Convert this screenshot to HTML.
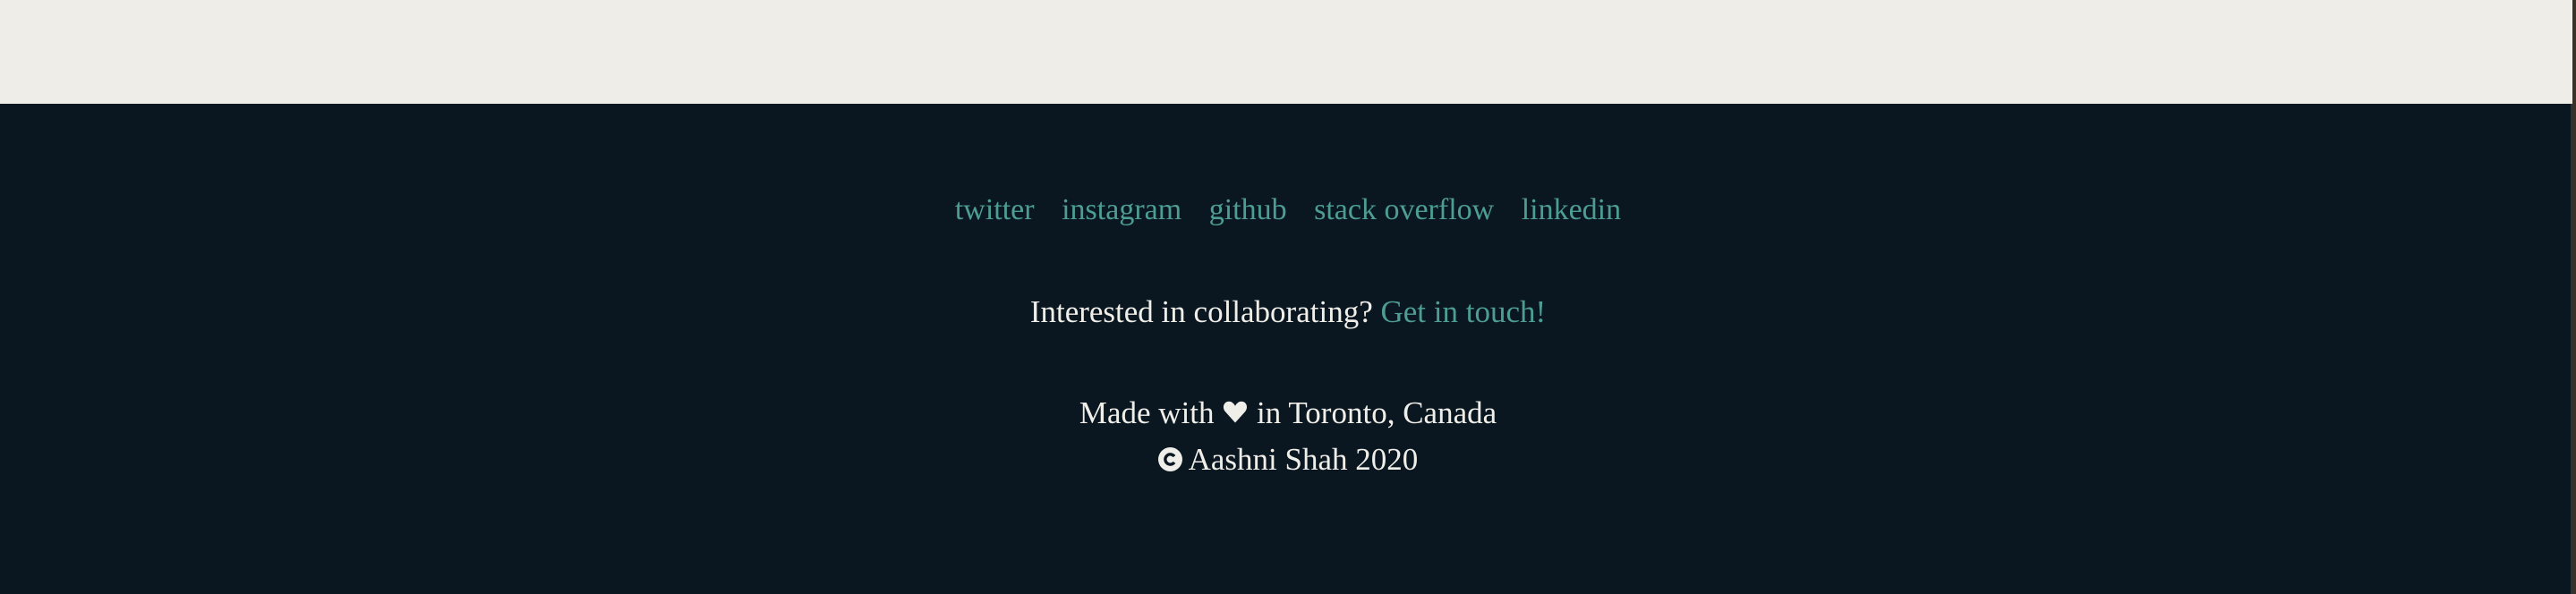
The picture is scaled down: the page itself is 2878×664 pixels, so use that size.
<!DOCTYPE html>
<html><head><style>
html,body{margin:0;padding:0;width:2878px;height:664px;overflow:hidden;background:#0a1721;font-family:"Liberation Serif",serif;}
.top{position:absolute;left:0;top:0;width:2874px;height:116px;background:#eeede8;}
.foot{position:absolute;left:2px;top:116px;width:2870px;height:548px;background:#0a1721;}
.edge{position:absolute;left:2872px;top:116px;width:2px;height:548px;background:#2a3540;}
.photo{position:absolute;left:2874px;top:0;width:4px;height:664px;background:#3a3226;}
.line{position:absolute;left:0;width:2878px;text-align:center;font-size:35px;color:#f0eee8;line-height:40px;}
a{color:#4d9d93;text-decoration:none;}
.links{font-size:34px;}
.links a{margin:0 11px;}
</style></head><body>
<div class="top"></div><div class="foot"></div><div class="edge"></div><div class="photo"></div>
<div class="line links" style="top:215px"><a>twitter</a> <a>instagram</a> <a>github</a> <a>stack overflow</a> <a>linkedin</a></div>
<div class="line" style="top:329px">Interested in collaborating? <a>Get in touch!</a></div>
<div class="line" style="top:442px">Made with <svg width="30" height="30" viewBox="0 0 24 24" style="vertical-align:-2px"><path d="M12 22 L3 12 C0 8 2 3 6.5 3 C9 3 11 5 12 7 C13 5 15 3 17.5 3 C22 3 24 8 21 12 Z" fill="#f0eee8"/></svg> in Toronto, Canada</div>
<div class="line" style="top:494px"><svg width="27" height="27" viewBox="0 0 24 24" style="vertical-align:-2px"><circle cx="12" cy="12" r="12" fill="#f0eee8"/><path d="M16 9 A5 5 0 1 0 16 15" stroke="#0a1721" stroke-width="3" fill="none"/></svg> Aashni Shah 2020</div>
</body></html>
